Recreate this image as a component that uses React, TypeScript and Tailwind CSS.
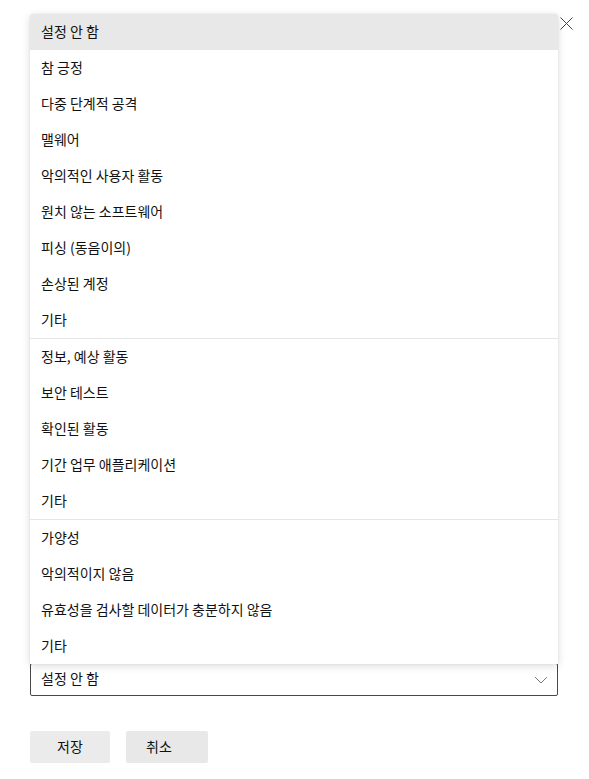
import React from "react";

const groups: string[][] = [
  [
    "설정 안 함",
    "참 긍정",
    "다중 단계적 공격",
    "맬웨어",
    "악의적인 사용자 활동",
    "원치 않는 소프트웨어",
    "피싱 (동음이의)",
    "손상된 계정",
    "기타",
  ],
  ["정보, 예상 활동", "보안 테스트", "확인된 활동", "기간 업무 애플리케이션", "기타"],
  ["가양성", "악의적이지 않음", "유효성을 검사할 데이터가 충분하지 않음", "기타"],
];

const font = { fontFamily: '"Noto Sans CJK KR", "Noto Sans", sans-serif' };

export default function App() {
  return (
    <div
      className="relative w-[589px] h-[779px] bg-white text-[#111] overflow-hidden"
      style={font}
    >
      {/* form flow */}
      <div className="flex flex-col px-[30px] pt-[663px]">
        <div className="flex h-[33px] w-[528px] items-center justify-between rounded-[2px] border border-[#484848] pb-[2px] pl-[10px] pr-[8px]">
          <span className="text-[14px]">설정 안 함</span>
          <svg width="14" height="8" viewBox="0 0 14 8" className="mr-[1px] mt-[2px]">
            <path d="M1 1 L7 7 L13 1" fill="none" stroke="#7a7a7a" strokeWidth="1" />
          </svg>
        </div>
        <div className="mt-[35px] flex gap-4">
          <button className="flex h-[32px] w-[80px] items-center justify-center rounded-[2px] bg-[#ebebeb] pb-[2px] text-[14px]">
            저장
          </button>
          <button className="flex h-[32px] w-[82px] items-center justify-center rounded-[2px] bg-[#e8e8e8] pb-[2px] pr-[16px] text-[14px]">
            취소
          </button>
        </div>
      </div>

      {/* close button */}
      <button className="absolute left-[559px] top-[16px] flex h-[14px] w-[14px] items-center justify-center">
        <svg width="13" height="13" viewBox="0 0 13 13">
          <path d="M0.5 0.5 L12.5 12.5 M12.5 0.5 L0.5 12.5" stroke="#444" strokeWidth="1" />
        </svg>
      </button>

      {/* dropdown panel overlay */}
      <div className="absolute left-[30px] top-[14px] w-[528px] rounded-t-[3px] bg-white shadow-[0_2px_8px_rgba(0,0,0,0.14),0_0_2px_rgba(0,0,0,0.08)] overflow-hidden">
        {groups.map((g, gi) => (
          <div key={gi} className={gi > 0 ? "border-t border-[#e6e6e6]" : ""}>
            {g.map((item, i) => (
              <div
                key={i}
                className={
                  "flex h-[36px] items-center pb-[2px] pl-[11px] text-[14px] " +
                  (gi === 0 && i === 0 ? "bg-[#e8e8e8]" : "bg-white")
                }
              >
                {item}
              </div>
            ))}
          </div>
        ))}
      </div>
    </div>
  );
}
